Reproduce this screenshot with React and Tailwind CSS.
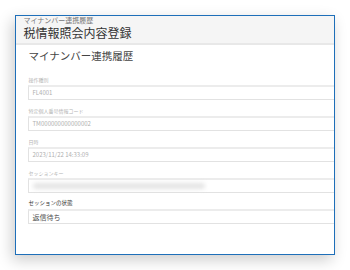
import React from "react";

const fields = [
  { label: "操作種別", value: "FL4001" },
  { label: "特定個人番号情報コード", value: "TM000000000000002" },
  { label: "日時", value: "2023/11/22 14:33:09" },
  { label: "セッションキー", value: null, blurred: true },
];

function Field({ label, value, blurred }) {
  return (
    <div className="flex flex-col">
      <div className="h-[9px] text-[5px] leading-[9px] text-[#b4b4b4] pl-[1px]">{label}</div>
      <div className="mt-[1px] h-[15px] w-[330px] border border-[#e2e2e2] border-t-2 border-t-[#ececec] bg-white flex items-center pl-[4px]">
        {blurred ? (
          <div className="h-[6px] w-[172px] rounded-full bg-[#e4e4e4] blur-[2px]" />
        ) : (
          <span className="text-[6px] leading-none text-[#b0b0b0]">{value}</span>
        )}
      </div>
    </div>
  );
}

export default function App() {
  return (
    <div
      className="w-[350px] h-[270px] bg-white overflow-hidden pt-[15px] pl-[15px]"
      style={{ fontFamily: '"Noto Sans CJK JP", "Noto Sans", sans-serif' }}
    >
      <div className="w-[320px] h-[240px] border-[1.5px] border-[#1e6fb9] bg-white overflow-hidden shadow-[-3px_5px_14px_rgba(0,0,0,0.2)]">
        {/* ヘッダー */}
        <div className="bg-[#f5f5f5] border-b-2 border-[#e8e8e8] pl-[7.5px] pb-[2.5px]">
          <div className="text-[7px] leading-[9px] text-[#777]">マイナンバー連携履歴</div>
          <div className="text-[12px] leading-[15px] text-[#333]">税情報照会内容登録</div>
        </div>

        <div className="pl-[11.5px] pt-[4px]">
          <div className="text-[10.5px] leading-[14px] text-[#444] pl-[1px]">マイナンバー連携履歴</div>

          <div className="mt-[12.5px] flex flex-col gap-[6px]">
            {fields.map(f => (
              <Field key={f.label} {...f} />
            ))}
            <div className="flex flex-col">
              <div className="h-[9px] text-[5.5px] leading-[9px] text-[#333] pl-[1px]">セッションの状態</div>
              <div className="mt-[1px] h-[15px] w-[330px] border border-[#e2e2e2] border-t-2 border-t-[#ececec] bg-white flex items-center pl-[4px]">
                <span className="text-[7px] leading-none text-[#555]">返信待ち</span>
              </div>
            </div>
            <div className="mt-[23px] text-[6px] leading-[9px] text-[#d4d8de] pl-[5px]">証明書情報</div>
          </div>
        </div>
      </div>
    </div>
  );
}
